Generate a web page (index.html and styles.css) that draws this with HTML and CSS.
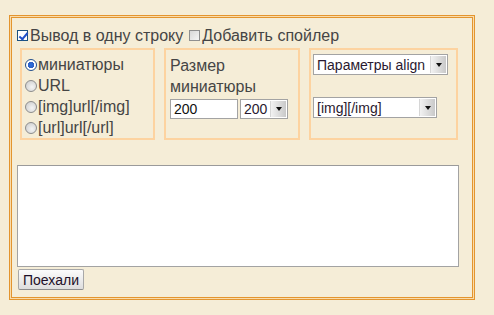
FILE: index.html
```html
<!DOCTYPE html>
<html lang="ru">
<head>
    <meta charset="UTF-8">
    <title>Загрузка картинок</title>
    <link rel="stylesheet" href="styles.css">
</head>
<body>
    <div class="box">
        <div class="top">
            <label class="check"><input type="checkbox" checked>Вывод в одну строку</label>
            <label class="check"><input type="checkbox">Добавить спойлер</label>
        </div>
        <div class="groups">
            <div class="group radios">
                <label><input type="radio" name="mode" checked>миниатюры</label>
                <label><input type="radio" name="mode">URL</label>
                <label><input type="radio" name="mode">[img]url[/img]</label>
                <label><input type="radio" name="mode">[url]url[/url]</label>
            </div>
            <div class="group size">
                <div class="caption">Размер<br>миниатюры</div>
                <div class="size-row">
                    <input class="text" type="text" value="200">
                    <span class="sel sel-size"><select><option>200</option></select><span class="arrow"></span></span>
                </div>
            </div>
            <div class="group align">
                <span class="sel sel-align"><select><option>Параметры align</option></select><span class="arrow"></span></span>
                <span class="sel sel-tag"><select><option>[img][/img]</option></select><span class="arrow"></span></span>
            </div>
        </div>
        <textarea class="result"></textarea>
        <button type="button" class="go">Поехали</button>
    </div>
</body>
</html>
```

FILE: styles.css
```css
body {
    margin: 0;
    padding: 15px 0 0 9px;
    background-color: #f5edd7;
    font-family: "Liberation Sans", Arial, sans-serif;
    color: #454545;
}
.box {
    width: 466px;
    height: 285px;
    box-sizing: border-box;
    padding: 10px 7px 0 7px;
    border: 1px solid #e3952f;
    box-shadow: inset 0 0 0 1px #f9dcab, inset 0 0 0 2px #e3952f;
}
.top {
    display: flex;
    gap: 6px;
    height: 19px;
    align-items: center;
    font-size: 16px;
}
.check {
    display: flex;
    align-items: center;
}
input[type="checkbox"] {
    appearance: none;
    width: 11px;
    height: 11px;
    margin: 0 2px 0 0;
    border: 1px solid #8f8f8f;
    background: linear-gradient(135deg, #d8d8d8, #f6f6f6);
    position: relative;
}
input[type="checkbox"]:checked {
    border-color: #1c5180;
    background: #fff;
}
input[type="checkbox"]:checked::after {
    content: "";
    position: absolute;
    left: 3px;
    top: 0;
    width: 3px;
    height: 7px;
    border: solid #2150c8;
    border-width: 0 2px 2px 0;
    transform: rotate(40deg);
}
.groups {
    display: flex;
    gap: 9px;
    margin: 3px 0 0 3px;
}
.group {
    height: 92px;
    box-sizing: border-box;
    border: 2px solid #fdd3a0;
}
.radios {
    width: 135px;
    padding: 5px 0 0 3px;
    display: flex;
    flex-direction: column;
    font-size: 16px;
}
.radios label {
    display: flex;
    align-items: center;
    height: 21px;
}
input[type="radio"] {
    appearance: none;
    width: 12px;
    height: 12px;
    margin: 0 1px 0 0;
    border-radius: 50%;
    border: 1px solid #8d8d8d;
    background: radial-gradient(circle at 60% 60%, #f4f4f4, #c9c9c9);
    box-sizing: border-box;
}
input[type="radio"]:checked {
    background: radial-gradient(circle, #2a6fe0 0, #2f5fc4 3px, #fff 3.5px);
    border-color: #244f8c;
}
.size {
    width: 136px;
    padding: 5px 0 0 4px;
    font-size: 16px;
}
.caption {
    line-height: 21px;
}
.size-row {
    display: flex;
    gap: 2px;
    margin-top: 2px;
}
.text {
    width: 68px;
    height: 20px;
    box-sizing: border-box;
    border: 1px solid #a3a3a3;
    padding: 0 3px;
    font: 14px "Liberation Sans", Arial, sans-serif;
    color: #111;
}
.align {
    width: 149px;
    padding: 4px 0 0 2px;
    display: flex;
    flex-direction: column;
    align-items: flex-start;
    gap: 22px;
}
.sel {
    display: inline-flex;
    align-items: center;
    box-sizing: border-box;
    height: 21px;
    border: 1px solid #a3a3a3;
    background: #fff;
    padding-right: 1px;
}
.sel select {
    appearance: none;
    border: none;
    background: transparent;
    flex: 1;
    min-width: 0;
    padding: 0 0 0 3px;
    font: 14px "Liberation Sans", Arial, sans-serif;
    color: #2a1a30;
    outline: none;
}
.sel-size {
    width: 48px;
    height: 20px;
}
.sel-align {
    width: 135px;
}
.sel-tag {
    width: 124px;
}
.arrow {
    width: 15px;
    height: 17px;
    display: flex;
    align-items: center;
    justify-content: center;
    background: linear-gradient(to right, #f2f2f2, #c9c9c9);
    border-left: 1px solid #d6d6d6;
}
.sel-size .arrow {
    height: 16px;
}
.arrow::after {
    content: "";
    border-style: solid;
    border-width: 4px 3.5px 0 3.5px;
    border-color: #111 transparent transparent transparent;
}
.result {
    display: block;
    width: 442px;
    height: 102px;
    box-sizing: border-box;
    margin: 25px 0 0 0;
    border: 1px solid #a3a3a3;
    border-top-color: #9a9a9a;
    resize: none;
    background: #fff;
}
.go {
    display: block;
    margin: 2px 0 0 1px;
    width: 66px;
    height: 21px;
    padding: 0;
    border: 1px solid #a8a8a8;
    border-bottom-color: #8c8c8c;
    border-radius: 2px;
    background: linear-gradient(#fbfbfb, #dedede);
    font: 14px "Liberation Sans", Arial, sans-serif;
    color: #1e1028;
}
```
